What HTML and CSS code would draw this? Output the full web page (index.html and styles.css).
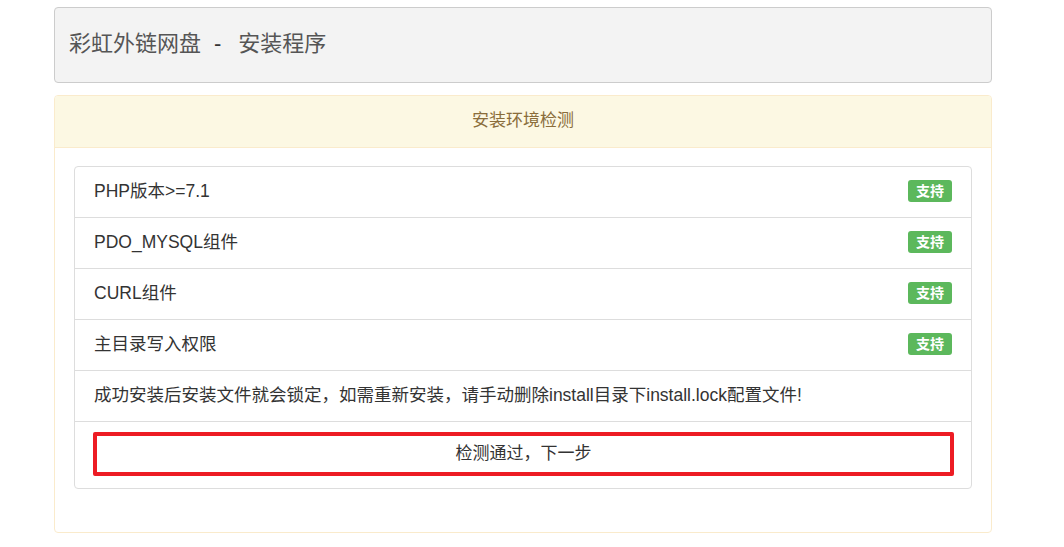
FILE: index.html
```
<!DOCTYPE html>
<html lang="zh-CN">

<head>
    <meta charset="UTF-8">
    <meta name="viewport" content="width=device-width, initial-scale=1.0">
    <title>彩虹外链网盘 - 安装程序</title>
    <link rel="stylesheet" href="styles.css">
</head>

<body>
    <div class="container">
        <div class="well">
            <h3>彩虹外链网盘<span class="sep">-</span>安装程序</h3>
        </div>
        <div class="panel">
            <div class="panel-heading">安装环境检测</div>
            <div class="panel-body">
                <ul class="list-group">
                    <li class="list-group-item">PHP版本&gt;=7.1<span class="badge">支持</span></li>
                    <li class="list-group-item">PDO_MYSQL组件<span class="badge">支持</span></li>
                    <li class="list-group-item">CURL组件<span class="badge">支持</span></li>
                    <li class="list-group-item">主目录写入权限<span class="badge">支持</span></li>
                    <li class="list-group-item">成功安装后安装文件就会锁定，如需重新安装，请手动删除install目录下install.lock配置文件!</li>
                    <li class="list-group-item btn-row"><a href="#" class="btn">检测通过，下一步</a></li>
                </ul>
            </div>
        </div>
    </div>
</body>

</html>
```

FILE: styles.css
```
* {
    padding: 0;
    margin: 0;
    box-sizing: border-box;
    list-style: none;
}

body {
    font-family: "Liberation Sans", "Noto Sans CJK SC", sans-serif;
    color: #333;
    background: #fff;
}

a {
    text-decoration: none;
    color: #333;
}

.container {
    width: 938px;
    margin: 7px 0 0 54px;
}

.well {
    height: 76px;
    display: flex;
    align-items: center;
    padding: 0 14px 8px;
    background: #f3f3f3;
    border: 1px solid #ccc;
    border-radius: 4px;
}

.well h3 {
    font-size: 22px;
    font-weight: normal;
    color: #555;
}

.sep {
    margin: 0 17px 0 13px;
    color: #333;
}

.panel {
    margin-top: 12px;
    border: 1px solid #faebcc;
    border-radius: 4px;
}

.panel-heading {
    height: 52px;
    line-height: 50px;
    text-align: center;
    font-size: 17px;
    color: #8a6d3b;
    background: #fcf8e3;
    border-bottom: 1px solid #faebcc;
    border-radius: 3px 3px 0 0;
}

.panel-body {
    padding: 18px 19px 43px;
}

.list-group {
    border: 1px solid #ddd;
    border-radius: 4px;
}

.list-group-item {
    display: flex;
    align-items: center;
    justify-content: space-between;
    height: 51px;
    padding: 0 19px 5px;
    font-size: 17.5px;
    border-top: 1px solid #ddd;
}

.list-group-item:first-child {
    border-top: none;
    height: 50px;
}

.badge {
    display: inline-block;
    margin-top: 2px;
    padding: 2px 8px;
    font-size: 14px;
    font-weight: bold;
    line-height: 18px;
    color: #fff;
    background: #5cb85c;
    border-radius: 3px;
}

.btn-row {
    height: 67px;
    padding: 9px 17px 12px 18px;
}

.btn {
    display: block;
    width: 100%;
    height: 44px;
    line-height: 35px;
    text-align: center;
    font-size: 17px;
    border: 4px solid #ed1c24;
    border-radius: 2px;
}
```
